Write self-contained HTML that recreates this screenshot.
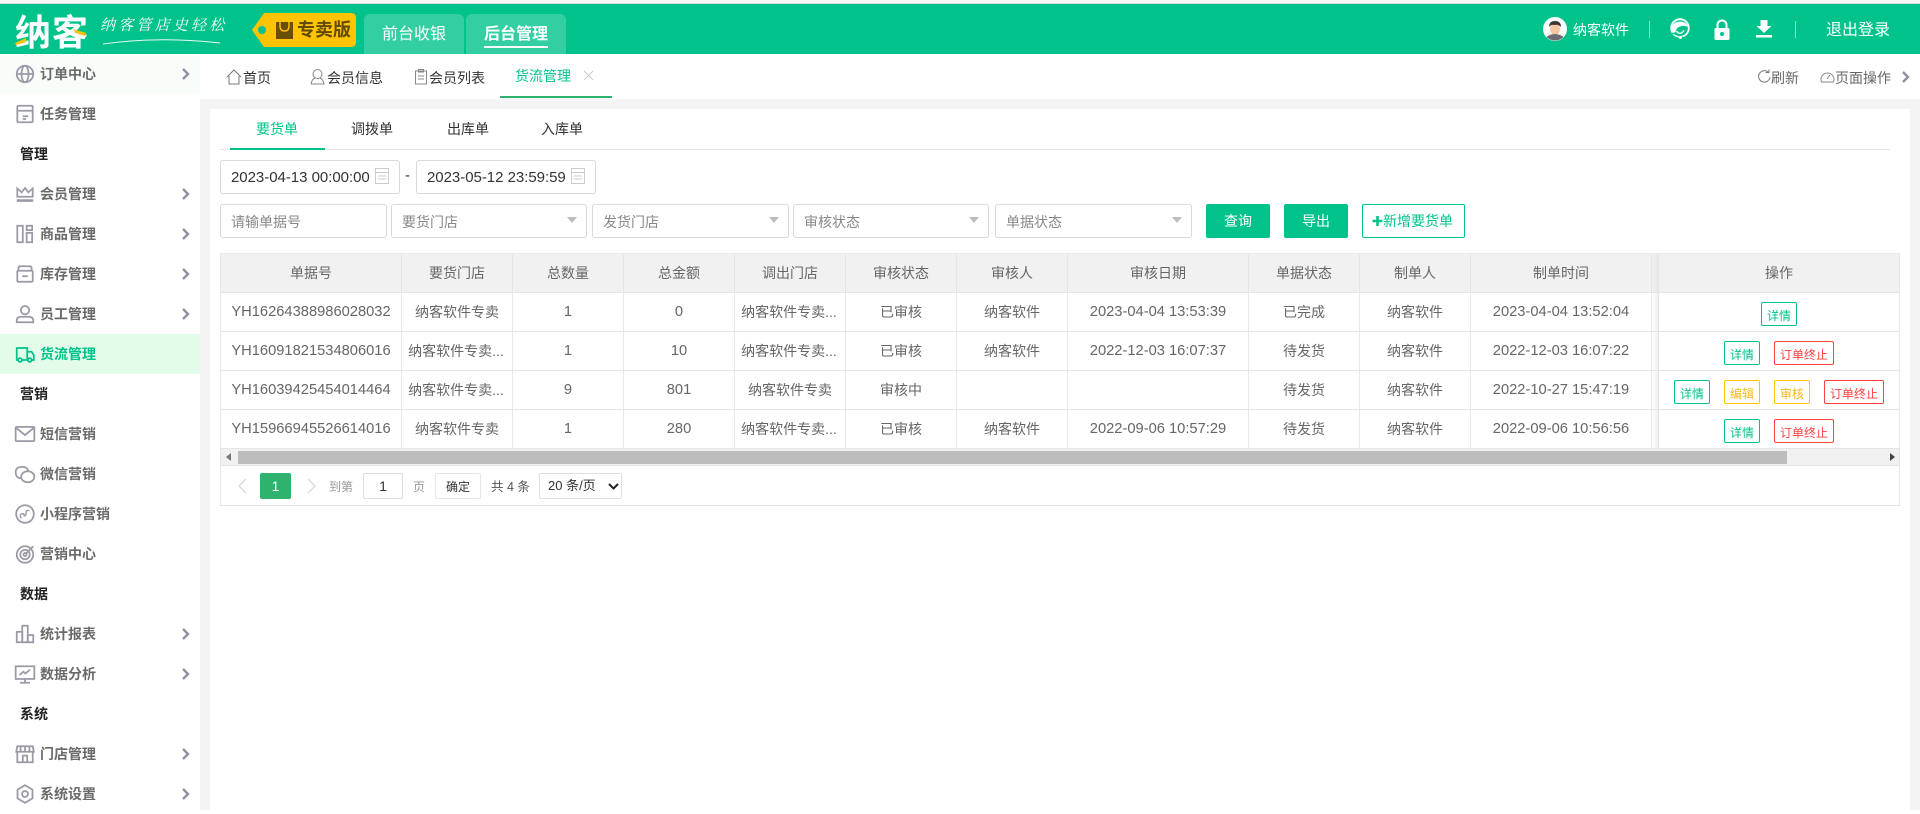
<!DOCTYPE html>
<html lang="zh-CN"><head><meta charset="utf-8"><title>货流管理</title>
<style>
*{box-sizing:border-box}
html,body{margin:0;padding:0;width:1920px;height:810px;overflow:hidden;background:#fff;font-family:"Liberation Sans","Noto Sans CJK SC",sans-serif;font-size:14px;color:#666}
.a{position:absolute;white-space:nowrap}
#top{left:0;top:0;width:1920px;height:4px;background:#f7f7f7;border-bottom:1px solid #ddd}
#hd{left:0;top:4px;width:1920px;height:50px;background:#00c38c}
.htab{position:absolute;top:14px;height:40px;width:100px;background:#33cfa3;border-radius:6px 6px 0 0;color:#fff;font-size:16px;line-height:42px;text-align:center}
#side{left:0;top:54px;width:200px;height:756px;background:#fff}
.m{position:absolute;left:0;width:200px;height:40px;line-height:40px;padding-left:40px;color:#6a6a6a;font-weight:700;font-size:14px}
.m.s{padding-left:20px;color:#222}
.m svg.i{position:absolute;left:14px;top:9px;width:22px;height:22px;fill:none;stroke:#9b99a6;stroke-width:1.6}
.m svg.c{position:absolute;left:181px;top:14px;width:9px;height:12px;fill:none;stroke:#918fa0;stroke-width:2.4}
#gl{left:200px;top:99px;width:1720px;height:711px;background:#f4f4f4}
#wh{left:210px;top:109px;width:1700px;height:701px;background:#fff}
.t{position:absolute;font-size:14px;color:#333;white-space:nowrap}
.inp{position:absolute;border:1px solid #d9d9d9;border-radius:3px;height:34px;line-height:34px;padding-left:10px;color:#888;background:#fff;white-space:nowrap}
.inp i{position:absolute;right:9px;top:12px;width:0;height:0;border-left:5px solid transparent;border-right:5px solid transparent;border-top:6px solid #bdbdbd}
.dt{font-size:15px;color:#333;height:34px;top:160px;width:180px;letter-spacing:-.03px}
.dt svg{position:absolute;left:154px;top:5px;width:14px;height:20px;fill:none;stroke:#ccc;stroke-width:1}
.btn{position:absolute;top:204px;height:34px;line-height:35px;text-align:center;background:#00c38c;color:#fff;border-radius:2px}
table{position:absolute;left:220px;top:253px;width:1680px;border-collapse:separate;border-spacing:0;table-layout:fixed;border-left:1px solid #e5e5e5;border-right:1px solid #e5e5e5}
th,td{padding:0;border-right:1px solid #e8e8e8;border-bottom:1px solid #e5e5e5;height:39px;text-align:center;font-weight:400;color:#666;overflow:hidden;white-space:nowrap;font-size:14px}
th{background:#f1f1f1;height:40px;border-top:1px solid #e8e8e8;border-right-color:#e5e5e5}
td.n{font-size:14.7px}
td.e{padding-right:2px}
td.g,th.g{background:linear-gradient(90deg,#f1f1f1,#e8e8e8);border-right:1px solid #e5e5e5}
td.g{background:linear-gradient(90deg,#fff,#efefef)}
td:last-child,th:last-child{border-right:0}
.b{display:inline-block;height:24px;width:36px;line-height:26px;font-size:12px;border:1px solid #00c38c;color:#00c38c;border-radius:2px;margin:0 7px;position:relative;top:2px;text-align:center}
.b.y{border-color:#ffc107;color:#f5b915}
.b.r{border-color:#ff4040;color:#ff4040;width:60px}
</style></head><body>
<div class="a" id="top"></div>
<div class="a" id="hd"></div>

<div class="a" style="left:15px;top:12px;width:76px;height:40px;color:#fff;font-size:36px;font-weight:700;line-height:42px;letter-spacing:1px">纳客</div>
<svg class="a" style="left:0;top:0" width="100" height="54"><path d="M15 43 L26 38 L26 42 L16 45Z" fill="#ffc107"/><path d="M73 29 L86 33 L85 36 L76 33Z" fill="#ffc107"/></svg>
<div class="a" style="left:100px;top:14px;color:#fff;font-size:15px;letter-spacing:3.2px;font-family:'Noto Serif CJK SC',serif;font-style:italic;line-height:22px">纳客管店史轻松</div>
<svg class="a" style="left:100px;top:34px" width="125" height="14"><path d="M3 10 Q60 2 120 9" fill="none" stroke="#fff" stroke-width="1" opacity=".9"/></svg>

<svg class="a" style="left:250px;top:11px" width="110" height="38"><path d="M14 2 H101 Q106 2 106 7 V31 Q106 36 101 36 H14 L2 19Z" fill="#ffc300"/><circle cx="12" cy="19" r="4" fill="#00c38c"/><rect x="26" y="11" width="17" height="17" fill="#6b4f00"/><path d="M30 11 V15 Q30 20 34.500 20 Q39 20 39 15 V11" fill="none" stroke="#ffc300" stroke-width="1.400"/></svg>
<div class="a" style="left:297px;top:18px;font-size:18px;font-weight:700;color:#5f4a00;line-height:24px">专卖版</div>
<div class="htab" style="left:364px">前台收银</div>
<div class="htab" style="left:466px;font-weight:700">后台管理<span style="position:absolute;left:18px;top:32px;width:64px;height:2px;background:#fff"></span></div>

<svg class="a" style="left:1543px;top:17px" width="24" height="24"><circle cx="12" cy="12" r="12" fill="#fff"/><ellipse cx="12" cy="12" rx="5" ry="6" fill="#f5c6a0"/><path d="M6 10 Q6 4 12 4 Q18 4 18 10 Q15 7 12 8 Q8 7 6 10Z" fill="#3c3535"/><path d="M3.500 20 Q7 17 12 17 Q17 17 20.500 20 A12 12 0 0 1 3.500 20Z" fill="#6e6a72"/></svg>
<div class="a" style="left:1573px;top:20px;color:#fff;font-size:14px;line-height:20px">纳客软件</div>
<div class="a" style="left:1649px;top:21px;width:1px;height:17px;background:#8fe3cb"></div>
<svg class="a" style="left:1670px;top:18px" width="20" height="22"><circle cx="10" cy="10" r="8.800" fill="none" stroke="#fff" stroke-width="1.800"/><path d="M1.500 11 Q2 4 10 3.500 Q17 4 18 9 Q14 7 10 8.500 Q6 9.500 5.500 14.500 L2.500 14.500Z" fill="#fff"/><path d="M6.500 13 Q10 18 14 12.500" fill="none" stroke="#fff" stroke-width="1.300"/><path d="M13.500 19.500 L2 15" stroke="#00c38c" stroke-width="1.200" fill="none"/><circle cx="10.500" cy="19.500" r="1.500" fill="#fff"/></svg>
<svg class="a" style="left:1713px;top:19px" width="18" height="22"><path d="M4.500 9 V6 A4.500 4.500 0 0 1 13.500 6 V9" fill="none" stroke="#fff" stroke-width="2"/><rect x="1.500" y="9" width="15" height="12" rx="1.500" fill="#fff"/><circle cx="9" cy="15" r="2" fill="#00c38c"/></svg>
<svg class="a" style="left:1755px;top:19px" width="18" height="20"><path d="M5.500 1 H12.500 V7 H16.500 L9 14 L1.500 7 H5.500Z" fill="#fff"/><rect x="1" y="16" width="16" height="2.500" fill="#fff"/></svg>
<div class="a" style="left:1795px;top:21px;width:1px;height:17px;background:#8fe3cb"></div>
<div class="a" style="left:1826px;top:19px;color:#fff;font-size:16px;line-height:24px">退出登录</div>

<div class="a" id="side">
<div class="m" style="top:0;background:#f8fdf9"><svg class="i" viewBox="0 0 20 20"><circle cx="10" cy="10" r="7.500"/><ellipse cx="10" cy="10" rx="3.200" ry="7.500"/><path d="M2.500 10H17.500"/></svg>订单中心<svg class="c" viewBox="0 0 9 12"><path d="M2 1L7 6L2 11"/></svg></div>
<div class="m" style="top:40px"><svg class="i" viewBox="0 0 20 20"><rect x="3" y="2.500" width="14" height="15" rx="1"/><path d="M3 7H17M8 12H13M8 14.500H11"/></svg>任务管理</div>
<div class="m s" style="top:80px">管理</div>
<div class="m" style="top:120px"><svg class="i" viewBox="0 0 20 20"><path d="M3 12.500V5L7 8.500L10 4.500L13 8.500L17 5V12.500Z"/><path d="M2.500 16H17.500" stroke-width="2.400"/></svg>会员管理<svg class="c" viewBox="0 0 9 12"><path d="M2 1L7 6L2 11"/></svg></div>
<div class="m" style="top:160px"><svg class="i" viewBox="0 0 20 20"><rect x="3" y="2.500" width="5" height="15"/><rect x="11.500" y="2.500" width="5" height="4"/><rect x="11.500" y="9" width="5" height="8.500"/></svg>商品管理<svg class="c" viewBox="0 0 9 12"><path d="M2 1L7 6L2 11"/></svg></div>
<div class="m" style="top:200px"><svg class="i" viewBox="0 0 20 20"><path d="M4 7V4.500Q4 3 6 3H14Q16 3 16 4.500V7"/><rect x="3" y="7" width="14" height="10" rx="1"/><path d="M7.500 12H12.500"/></svg>库存管理<svg class="c" viewBox="0 0 9 12"><path d="M2 1L7 6L2 11"/></svg></div>
<div class="m" style="top:240px"><svg class="i" viewBox="0 0 20 20"><circle cx="10" cy="6.500" r="3.800"/><path d="M2.500 17.500V16Q2.500 12.500 7 12.500H13Q17.500 12.500 17.500 16V17.500Z"/></svg>员工管理<svg class="c" viewBox="0 0 9 12"><path d="M2 1L7 6L2 11"/></svg></div>
<div class="m" style="top:280px;background:#e3fcea;color:#00c38c"><svg class="i" viewBox="0 0 20 20" style="stroke:#00c38c"><path d="M4 15.500H2.500V4.500H12V15.500H7.500M12 8H16L18 11V15.500H16"/><circle cx="5.500" cy="15.500" r="1.700"/><circle cx="14.300" cy="15.500" r="1.700"/></svg>货流管理</div>
<div class="m s" style="top:320px">营销</div>
<div class="m" style="top:360px"><svg class="i" viewBox="0 0 20 20"><rect x="1.500" y="3.500" width="17" height="13" rx="1"/><path d="M2 4.500L10 11L18 4.500"/></svg>短信营销</div>
<div class="m" style="top:400px"><svg class="i" viewBox="0 0 20 20"><path d="M6 14Q1.500 13 1.500 8.500Q1.500 3.500 7.500 3.500Q12 3.500 13 7"/><ellipse cx="12.500" cy="12.500" rx="6" ry="5"/></svg>微信营销</div>
<div class="m" style="top:440px"><svg class="i" viewBox="0 0 20 20"><circle cx="10" cy="10" r="8"/><path d="M7 13.500Q5 13 6 10.500Q7 9 9 10V9.500V11Q9.500 13 11 10V8Q11.500 6 14 7" stroke-width="1.300"/></svg>小程序营销</div>
<div class="m" style="top:480px"><svg class="i" viewBox="0 0 20 20"><circle cx="10" cy="10.500" r="7.500"/><circle cx="10" cy="10.500" r="4.300"/><circle cx="10" cy="10.500" r="1.400"/><path d="M11 9.500L17.500 3"/></svg>营销中心</div>
<div class="m s" style="top:520px">数据</div>
<div class="m" style="top:560px"><svg class="i" viewBox="0 0 20 20"><rect x="2.500" y="8" width="5" height="9.500"/><rect x="7.500" y="2.500" width="5" height="15"/><rect x="12.500" y="11" width="5" height="6.500"/></svg>统计报表<svg class="c" viewBox="0 0 9 12"><path d="M2 1L7 6L2 11"/></svg></div>
<div class="m" style="top:600px"><svg class="i" viewBox="0 0 20 20"><rect x="1.500" y="3" width="17" height="11.500"/><path d="M10 14.500V17.500M5.500 18H14.500M5 11L8.500 8L10.500 9.500L14.500 6" /></svg>数据分析<svg class="c" viewBox="0 0 9 12"><path d="M2 1L7 6L2 11"/></svg></div>
<div class="m s" style="top:640px">系统</div>
<div class="m" style="top:680px"><svg class="i" viewBox="0 0 20 20"><path d="M3 3H17L18 8H2ZM3 8V17.500H17V8M8 17.500V11.500H12V17.500M6 3V8M10 3V8M14 3V8"/></svg>门店管理<svg class="c" viewBox="0 0 9 12"><path d="M2 1L7 6L2 11"/></svg></div>
<div class="m" style="top:720px"><svg class="i" viewBox="0 0 20 20"><path d="M10 2L16.800 6V14L10 18L3.200 14V6Z"/><circle cx="10" cy="10" r="2.700"/></svg>系统设置<svg class="c" viewBox="0 0 9 12"><path d="M2 1L7 6L2 11"/></svg></div>
</div>

<div class="a" id="gl"></div>
<div class="a" id="wh"></div>

<!-- page tabs -->
<svg class="a" style="left:226px;top:68px" width="18" height="18" fill="none" stroke="#777" stroke-width="1"><path d="M1 9L8 2L15 9M3 8V16H13V8"/></svg>
<div class="t" style="left:243px;top:68px">首页</div>
<svg class="a" style="left:310px;top:68px" width="17" height="18" fill="none" stroke="#888" stroke-width="1"><circle cx="7.500" cy="6" r="4.500"/><path d="M1 16Q2 11 5 10M10 10Q13 11 14 16H1"/></svg>
<div class="t" style="left:327px;top:68px">会员信息</div>
<svg class="a" style="left:414px;top:68px" width="15" height="18" fill="none" stroke="#888" stroke-width="1"><rect x="1.500" y="3" width="11" height="13"/><path d="M4.500 1.500H9.500V4H4.500ZM4 8H10M4 11H10"/></svg>
<div class="t" style="left:429px;top:68px">会员列表</div>
<div class="t" style="left:515px;top:66px;color:#00c38c">货流管理</div>
<svg class="a" style="left:583px;top:70px" width="11" height="11" stroke="#ccc" stroke-width="1"><path d="M1 1L10 10M10 1L1 10"/></svg>
<div class="a" style="left:500px;top:96px;width:112px;height:2px;background:#2fb170"></div>
<svg class="a" style="left:1757px;top:69px" width="14" height="15" fill="none" stroke="#777" stroke-width="1"><path d="M11.500 3.500A5.700 5.700 0 1 0 13 8"/><path d="M8.500 3.500H12V0.500"/></svg>
<div class="t" style="left:1771px;top:68px;color:#666">刷新</div>
<svg class="a" style="left:1820px;top:70px" width="15" height="13" fill="none" stroke="#888" stroke-width="1"><path d="M1.500 12A6.500 6.500 0 1 1 13.500 12ZM7 9L10 5"/></svg>
<div class="t" style="left:1835px;top:68px;color:#666">页面操作</div>
<svg class="a" style="left:1901px;top:71px" width="9" height="12" fill="none" stroke="#918fa0" stroke-width="2.400"><path d="M2 1L7 6L2 11"/></svg>

<!-- sub tabs -->
<div class="a" style="left:220px;top:149px;width:1670px;height:1px;background:#e5e5e5"></div>
<div class="a" style="left:230px;top:148px;width:95px;height:2px;background:#00c38c"></div>
<div class="t" style="left:256px;top:119px;color:#00c38c">要货单</div>
<div class="t" style="left:351px;top:119px">调拨单</div>
<div class="t" style="left:447px;top:119px">出库单</div>
<div class="t" style="left:541px;top:119px">入库单</div>

<!-- filters -->
<div class="inp dt" style="left:220px">2023-04-13 00:00:00<svg viewBox="0 0 14 20"><rect x="0.500" y="2.500" width="13" height="15"/><path d="M0.500 6.500H13.500M3 10H11M3 13H11"/></svg></div>
<div class="a" style="left:405px;top:167px;color:#333;font-size:15px">-</div>
<div class="inp dt" style="left:416px">2023-05-12 23:59:59<svg viewBox="0 0 14 20"><rect x="0.500" y="2.500" width="13" height="15"/><path d="M0.500 6.500H13.500M3 10H11M3 13H11"/></svg></div>
<div class="inp" style="left:220px;top:204px;width:167px">请输单据号</div>
<div class="inp" style="left:391px;top:204px;width:196px">要货门店<i></i></div>
<div class="inp" style="left:592px;top:204px;width:197px">发货门店<i></i></div>
<div class="inp" style="left:793px;top:204px;width:196px">审核状态<i></i></div>
<div class="inp" style="left:995px;top:204px;width:197px">单据状态<i></i></div>
<div class="btn" style="left:1206px;width:64px">查询</div>
<div class="btn" style="left:1284px;width:64px">导出</div>
<div class="btn" style="left:1362px;width:103px;background:#fff;border:1px solid #00c38c;color:#00c38c;line-height:33px;text-align:left;padding-left:9px"><svg width="11" height="12" style="vertical-align:-1px"><path d="M0.500 6H10.500M5.500 1V11" stroke="#00c38c" stroke-width="2.600"/></svg>新增要货单</div>

<table>
<colgroup><col style="width:181px"><col style="width:111px"><col style="width:111px"><col style="width:111px"><col style="width:111px"><col style="width:111px"><col style="width:111px"><col style="width:181px"><col style="width:111px"><col style="width:111px"><col style="width:181px"><col style="width:7px"><col></colgroup>
<tr><th>单据号</th><th>要货门店</th><th>总数量</th><th>总金额</th><th>调出门店</th><th>审核状态</th><th>审核人</th><th>审核日期</th><th>单据状态</th><th>制单人</th><th>制单时间</th><th class="g"></th><th>操作</th></tr>
<tr><td class="n">YH16264388986028032</td><td>纳客软件专卖</td><td class="n">1</td><td class="n">0</td><td class="e">纳客软件专卖...</td><td>已审核</td><td>纳客软件</td><td class="n">2023-04-04 13:53:39</td><td>已完成</td><td>纳客软件</td><td class="n">2023-04-04 13:52:04</td><td class="g"></td><td><span class="b">详情</span></td></tr>
<tr><td class="n">YH16091821534806016</td><td class="e">纳客软件专卖...</td><td class="n">1</td><td class="n">10</td><td class="e">纳客软件专卖...</td><td>已审核</td><td>纳客软件</td><td class="n">2022-12-03 16:07:37</td><td>待发货</td><td>纳客软件</td><td class="n">2022-12-03 16:07:22</td><td class="g"></td><td><span class="b">详情</span><span class="b r">订单终止</span></td></tr>
<tr><td class="n">YH16039425454014464</td><td class="e">纳客软件专卖...</td><td class="n">9</td><td class="n">801</td><td>纳客软件专卖</td><td>审核中</td><td></td><td></td><td>待发货</td><td>纳客软件</td><td class="n">2022-10-27 15:47:19</td><td class="g"></td><td><span class="b">详情</span><span class="b y">编辑</span><span class="b y">审核</span><span class="b r">订单终止</span></td></tr>
<tr><td class="n">YH15966945526614016</td><td>纳客软件专卖</td><td class="n">1</td><td class="n">280</td><td class="e">纳客软件专卖...</td><td>已审核</td><td>纳客软件</td><td class="n">2022-09-06 10:57:29</td><td>待发货</td><td>纳客软件</td><td class="n">2022-09-06 10:56:56</td><td class="g"></td><td><span class="b">详情</span><span class="b r">订单终止</span></td></tr>
</table>

<!-- scrollbar + footer -->
<div class="a" style="left:220px;top:449px;width:1680px;height:57px;border:1px solid #e5e5e5;border-top:0"></div>
<div class="a" style="left:221px;top:449px;width:1678px;height:17px;background:#f1f1f1;border-bottom:1px solid #e5e5e5"></div>
<div class="a" style="left:238px;top:451px;width:1549px;height:13px;background:#bdbdbd"></div>
<svg class="a" style="left:226px;top:453px" width="6" height="9"><path d="M5 0V8L0 4Z" fill="#777"/></svg>
<svg class="a" style="left:1890px;top:453px" width="6" height="9"><path d="M0 0V8L5 4Z" fill="#444"/></svg>

<svg class="a" style="left:237px;top:477px" width="12" height="18" fill="none" stroke="#ddd" stroke-width="1.500"><path d="M9 2L2 9L9 16"/></svg>
<div class="a" style="left:260px;top:473px;width:31px;height:26px;background:#30b26f;border-radius:2px;color:#fff;text-align:center;line-height:27px">1</div>
<svg class="a" style="left:305px;top:477px" width="12" height="18" fill="none" stroke="#ddd" stroke-width="1.500"><path d="M3 2L10 9L3 16"/></svg>
<div class="a" style="left:329px;top:478px;font-size:12px;color:#999;line-height:18px">到第</div>
<div class="a" style="left:363px;top:473px;width:40px;height:26px;border:1px solid #ddd;border-radius:2px;color:#333;text-align:center;line-height:25px">1</div>
<div class="a" style="left:413px;top:478px;font-size:12px;color:#999;line-height:18px">页</div>
<div class="a" style="left:435px;top:473px;width:46px;height:26px;border:1px solid #e5e5e5;border-radius:2px;color:#333;text-align:center;line-height:26px;font-size:12px">确定</div>
<div class="a" style="left:491px;top:478px;font-size:12.5px;color:#555;line-height:18px">共 4 条</div>
<div class="a" style="left:539px;top:473px;width:83px;height:26px;border:1px solid #e0e0e0;border-radius:2px;color:#333;line-height:24px;padding-left:8px;font-size:13px">20 条/页</div>
<svg class="a" style="left:608px;top:483px" width="11" height="8" fill="none" stroke="#222" stroke-width="2"><path d="M1 1L5.500 5.500L10 1"/></svg>
</body></html>
